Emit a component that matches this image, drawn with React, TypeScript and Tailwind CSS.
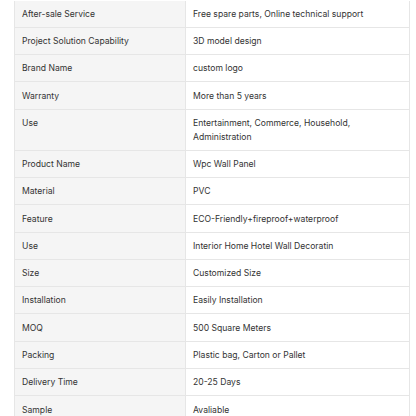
const rows: [string, string][] = [
  ['After-sale Service', 'Free spare parts, Online technical support'],
  ['Project Solution Capability', '3D model design'],
  ['Brand Name', 'custom logo'],
  ['Warranty', 'More than 5 years'],
  ['Use', 'Entertainment, Commerce, Household, Administration'],
  ['Product Name', 'Wpc Wall Panel'],
  ['Material', 'PVC'],
  ['Feature', 'ECO-Friendly+fireproof+waterproof'],
  ['Use', 'Interior Home Hotel Wall Decoratin'],
  ['Size', 'Customized Size'],
  ['Installation', 'Easily Installation'],
  ['MOQ', '500 Square Meters'],
  ['Packing', 'Plastic bag, Carton or Pallet'],
  ['Delivery Time', '20-25 Days'],
  ['Sample', 'Avaliable'],
];

export default function App() {
  return (
    <div className="w-[416px] h-[416px] overflow-hidden bg-white pt-[0.5px] font-['Inter',sans-serif] text-[8.6px] leading-[13.7px] text-[#333]">
      <div className="ml-[14px] w-[396px] border-x border-[#e6e6e6]">
        {rows.map(([label, value], i) => (
          <div key={i} className="grid grid-cols-[171px_1fr] border-b border-[#e6e6e6]">
            <div className="bg-[#f5f5f5] px-[7px] pt-[7.3px] pb-[5.3px] border-r border-[#e6e6e6]">{label}</div>
            <div className="px-[7px] pt-[7.3px] pb-[5.3px]">{value}</div>
          </div>
        ))}
      </div>
    </div>
  );
}
